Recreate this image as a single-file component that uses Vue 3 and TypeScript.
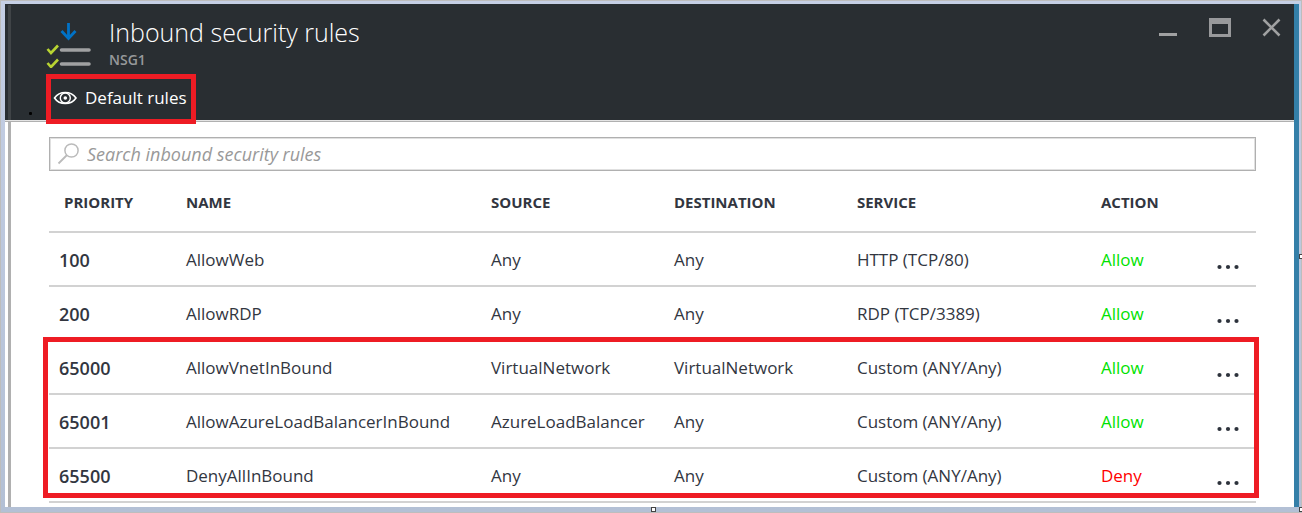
<script setup lang="ts">
import { computed, ref } from 'vue'

interface Rule {
  priority: number
  name: string
  source: string
  destination: string
  service: string
  action: 'Allow' | 'Deny'
}

const rules: Rule[] = [
  { priority: 100, name: 'AllowWeb', source: 'Any', destination: 'Any', service: 'HTTP (TCP/80)', action: 'Allow' },
  { priority: 200, name: 'AllowRDP', source: 'Any', destination: 'Any', service: 'RDP (TCP/3389)', action: 'Allow' },
  { priority: 65000, name: 'AllowVnetInBound', source: 'VirtualNetwork', destination: 'VirtualNetwork', service: 'Custom (ANY/Any)', action: 'Allow' },
  { priority: 65001, name: 'AllowAzureLoadBalancerInBound', source: 'AzureLoadBalancer', destination: 'Any', service: 'Custom (ANY/Any)', action: 'Allow' },
  { priority: 65500, name: 'DenyAllInBound', source: 'Any', destination: 'Any', service: 'Custom (ANY/Any)', action: 'Deny' },
]

const query = ref('')
const showDefaults = ref(true)

const visibleRules = computed(() =>
  rules.filter(
    (r) =>
      (showDefaults.value || r.priority < 65000) &&
      r.name.toLowerCase().includes(query.value.toLowerCase()),
  ),
)
const allShown = computed(() => visibleRules.value.length === rules.length)
</script>

<template>
  <div class="frame">
    <main class="blade">
      <header class="head">
        <div class="title-row">
          <svg class="rules-icon" width="46" height="48" viewBox="0 0 46 48" aria-hidden="true">
            <path d="M22.500 3v15M15.500 11l7 7.500 7-7.500" fill="none" stroke="#0072c6" stroke-width="2.800" />
            <path d="M15.500 30h27.500M15.500 44h27.500" stroke="#a0a1a2" stroke-width="3.600" stroke-linecap="round" />
            <path d="M1.500 29l3.500 4 7-7.500M1.500 43l3.500 4 7-7.500" fill="none" stroke="#b8d432" stroke-width="2.600" />
          </svg>
          <div class="titles">
            <h1>Inbound security rules</h1>
            <p>NSG1</p>
          </div>
          <div class="controls">
            <button type="button" aria-label="Minimize">
              <svg width="24" height="24" viewBox="0 0 24 24"><path d="M3 18.500h18" stroke="#a0a1a2" stroke-width="3" /></svg>
            </button>
            <button type="button" aria-label="Maximize">
              <svg width="24" height="24" viewBox="0 0 24 24">
                <path d="M1 2h22v19H1zM4 8v10h16V8z" fill="#98999b" fill-rule="evenodd" />
              </svg>
            </button>
            <button type="button" aria-label="Close">
              <svg width="24" height="24" viewBox="0 0 24 24"><path d="M3.500 3.500l16 16M19.500 3.500l-16 16" stroke="#a0a1a2" stroke-width="2.600" /></svg>
            </button>
          </div>
        </div>
        <button type="button" class="defaults" :aria-pressed="showDefaults" @click="showDefaults = !showDefaults">
          <svg width="24" height="16" viewBox="0 0 24 16" aria-hidden="true">
            <path d="M1.500 8C6.500 .6 18 .6 23 8 18 15.400 6.500 15.400 1.500 8z" fill="none" stroke="#fff" stroke-width="1.600" />
            <circle cx="12.300" cy="8" r="5" fill="none" stroke="#fff" stroke-width="1.400" />
            <circle cx="12.300" cy="8" r="1.800" fill="#fff" />
          </svg>
          <span>Default rules</span>
        </button>
        <i class="speck"></i>
      </header>

      <section class="content">
        <label class="search">
          <svg width="24" height="24" viewBox="0 0 24 24" aria-hidden="true">
            <circle cx="14.500" cy="8.500" r="6.600" fill="none" stroke="#bbb" stroke-width="1.500" />
            <path d="M10 13L1.500 21.500" stroke="#bbb" stroke-width="1.800" />
          </svg>
          <input v-model="query" type="text" aria-label="Search inbound security rules" placeholder="Search inbound security rules" />
        </label>

        <div class="table-wrap">
          <table>
            <colgroup>
              <col class="c-priority" />
              <col class="c-name" />
              <col class="c-addr" />
              <col class="c-addr" />
              <col class="c-service" />
              <col class="c-action" />
              <col />
            </colgroup>
            <thead>
              <tr>
                <th scope="col">PRIORITY</th>
                <th scope="col">NAME</th>
                <th scope="col">SOURCE</th>
                <th scope="col">DESTINATION</th>
                <th scope="col">SERVICE</th>
                <th scope="col">ACTION</th>
                <th></th>
              </tr>
            </thead>
            <tbody>
              <tr v-for="rule in visibleRules" :key="rule.priority">
                <td class="priority">{{ rule.priority }}</td>
                <td>{{ rule.name }}</td>
                <td>{{ rule.source }}</td>
                <td>{{ rule.destination }}</td>
                <td>{{ rule.service }}</td>
                <td :class="rule.action.toLowerCase()">{{ rule.action }}</td>
                <td class="menu">
                  <button type="button" :aria-label="`More actions for ${rule.name}`">
                    <svg width="24" height="6" viewBox="0 0 24 6">
                      <circle cx="3.500" cy="3" r="2.100" />
                      <circle cx="12" cy="3" r="2.100" />
                      <circle cx="20.500" cy="3" r="2.100" />
                    </svg>
                  </button>
                </td>
              </tr>
            </tbody>
          </table>
          <div v-if="allShown" class="highlight"></div>
        </div>
      </section>
    </main>
    <i class="handle handle-bottom"></i>
    <i class="handle handle-right"></i>
    <i class="handle handle-corner"></i>
  </div>
</template>

<style>
body {
  margin: 0;
}
</style>

<style scoped>
* {
  box-sizing: border-box;
}

.frame {
  position: relative;
  min-height: 100vh;
  padding: 3px 2px 5px 4px;
  border: 1px solid #bdbdbd;
  background: linear-gradient(#c5cfe5, #b3c0d5);
  font-family: 'Open Sans', 'Noto Sans', sans-serif;
  font-size: 17px;
  color: #32363f;
}

.blade {
  position: relative;
  border-right: 5px solid #347fa8;
  background: #fff;
}

/* vertical rail along the left edge */
.blade::before {
  content: '';
  position: absolute;
  top: 1px;
  bottom: 0;
  left: 3px;
  z-index: 1;
  width: 3px;
  background: #b0b0b0;
}

.head {
  position: relative;
  z-index: 2;
  height: 118px;
  padding: 0 10px 0 41px;
  border-bottom: 1px solid #b0b0b0;
  background: linear-gradient(#292e32, #292e32) top / 100% 116px no-repeat #e4e4e4;
}

.head::before {
  content: '';
  position: absolute;
  top: 1px;
  left: 3px;
  width: 3px;
  height: 115px;
  background: #404447;
}

.title-row {
  display: flex;
  height: 70px;
}

.rules-icon {
  margin-top: 16px;
}

.titles {
  flex: 1;
  padding: 8px 0 0 17px;
}

h1 {
  margin: 0;
  font-size: 25px;
  font-weight: 300;
  line-height: 40px;
  color: #fff;
}

p {
  margin: 0;
  font-size: 14px;
  font-weight: 600;
  line-height: 16px;
  color: #97999b;
}

.controls {
  display: flex;
  gap: 28px;
  padding-top: 12px;
}

button {
  padding: 0;
  border: 0;
  background: none;
  font: inherit;
  color: inherit;
  cursor: pointer;
}

svg {
  display: block;
}

.controls button {
  width: 24px;
  height: 24px;
}

.defaults {
  position: relative;
  display: flex;
  align-items: center;
  gap: 8px;
  height: 50px;
  padding: 0 4px 2px 2px;
  border: 5px solid #ee1c24;
  line-height: 24px;
  color: #fff;
}

.speck {
  position: absolute;
  left: 24px;
  bottom: 6px;
  width: 3px;
  height: 3px;
  border-radius: 1px;
  background: #000;
}

.content {
  padding: 15px 38px 4px 44px;
}

.search {
  display: flex;
  align-items: center;
  gap: 6px;
  height: 34px;
  padding-left: 7px;
  border: 1px solid #b0b0b0;
  box-shadow: inset 0 0 0 1px #e0e0e0;
  font-size: 18px;
}

input {
  flex: 1;
  min-width: 0;
  padding: 0;
  border: 0;
  outline: 0;
  background: none;
  font: inherit;
  font-style: italic;
  line-height: 24px;
  color: #32363f;
}

input::placeholder {
  color: #999;
  opacity: 1;
}

.table-wrap {
  position: relative;
}

table {
  width: 100%;
  table-layout: fixed;
  border-spacing: 0;
}

.c-priority {
  width: 11.35%;
}

.c-name {
  width: 25.27%;
}

.c-addr {
  width: 15.16%;
}

.c-service {
  width: 20.22%;
}

.c-action {
  width: 9.5%;
}

th {
  height: 62px;
  padding: 2px 0 0;
  border-bottom: 2px solid #d2d2d2;
  font-size: 15px;
  font-weight: 700;
  text-align: left;
}

th:first-child {
  padding-left: 15px;
}

td {
  height: 54px;
  padding: 2px 0 0;
  border-bottom: 2px solid #d2d2d2;
  line-height: 24px;
  white-space: nowrap;
}

.priority {
  padding-left: 10px;
  font-size: 18px;
  font-weight: 600;
}

.allow {
  color: #00e200;
}

.deny {
  color: #f00;
}

.menu {
  padding-top: 12px;
  line-height: 6px;
}

.menu svg {
  fill: #2d323c;
}

.highlight {
  position: absolute;
  top: 166px;
  right: -3px;
  bottom: 5px;
  left: -6px;
  border: 5px solid #ee1c24;
  pointer-events: none;
}

.handle {
  position: absolute;
  width: 5px;
  height: 5px;
  border: 1px solid #444;
  background: #fff;
}

.handle-bottom {
  bottom: 0;
  left: 50%;
}

.handle-right {
  top: 50%;
  right: -3px;
  margin-top: -3px;
}

.handle-corner {
  right: -3px;
  bottom: 0;
}
</style>
